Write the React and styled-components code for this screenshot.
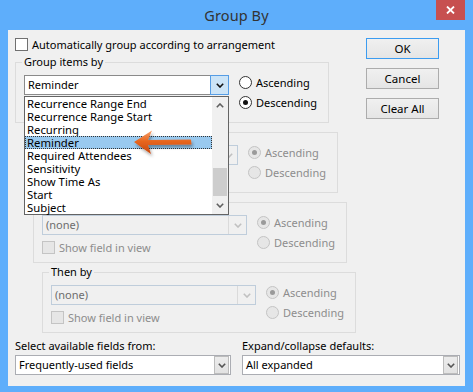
import React from "react";
import styled, { createGlobalStyle, css } from "styled-components";

const Global = createGlobalStyle`
  html, body { margin: 0; padding: 0; background: #5eaefb; }
  body { font-family: "Noto Sans", "Open Sans", sans-serif; font-size: 11px; color: #000; }
  * { box-sizing: border-box; }
`;

const Window = styled.div`
  width: 473px;
  height: 392px;
  background: #5eaefb;
  display: flex;
  flex-direction: column;
`;

const TitleBar = styled.div`
  height: 30px;
  display: grid;
  grid-template-columns: 1fr auto 1fr;
  align-items: start;
`;

const Title = styled.div`
  grid-column: 2;
  font-size: 14.5px;
  color: #333;
  line-height: 30px;
  letter-spacing: 0.1px;
`;

const CloseButton = styled.div`
  grid-column: 3;
  justify-self: end;
  margin-right: 8px;
  width: 29px;
  height: 20px;
  background: #c75050;
  display: flex;
  align-items: center;
  justify-content: center;
`;

const Content = styled.div`
  margin: 0 8px;
  height: 356px;
  background: #f0f0f0;
  padding: 8px 5px 0 7px;
  display: flex;
  flex-direction: column;
`;

const TopArea = styled.div`
  display: grid;
  grid-template-columns: 1fr 73px;
  padding-right: 21px;
`;

const Main = styled.div`
  display: flex;
  flex-direction: column;
`;

const Buttons = styled.div`
  display: flex;
  flex-direction: column;
  gap: 9px;
`;

const Button = styled.div`
  height: 21px;
  border: 1px solid ${(p) => (p.$default ? "#3c9cf0" : "#acacac")};
  background: linear-gradient(#f0f0f0, #e5e5e5);
  display: flex;
  align-items: center;
  justify-content: center;
  font-size: 11.5px;
  line-height: 1;
`;

const CheckRow = styled.label`
  display: flex;
  align-items: center;
  gap: 4px;
  height: 13px;
  color: ${(p) => (p.$disabled ? "#8d8d8d" : "#000")};
  line-height: 13px;
  white-space: nowrap;
`;

const CheckBox = styled.span`
  width: 13px;
  height: 13px;
  flex: none;
  border: 1px solid ${(p) => (p.$disabled ? "#c4c4c4" : "#707070")};
  background: ${(p) => (p.$disabled ? "#e6e6e6" : "#fff")};
`;

const Group = styled.fieldset`
  margin: ${(p) => (p.$first ? "3px" : "1px")} 0 0 ${(p) => p.$indent}px;
  width: 314px;
  height: 69px;
  padding: 5px 8px 0 8px;
  border: 1px solid #dcdcdc;
  min-width: 0;
`;

const Legend = styled.legend`
  padding: 0 2px;
  margin-left: -2px;
  line-height: 16px;
  color: #000;
`;

const GroupBody = styled.div`
  display: flex;
  gap: 10px;
`;

const FieldCol = styled.div`
  width: 205px;
  display: flex;
  flex-direction: column;
  gap: 6px;
`;

const RadioCol = styled.div`
  display: flex;
  flex-direction: column;
  gap: 7px;
  margin-top: 1px;
`;

const RadioRow = styled.div`
  display: flex;
  align-items: center;
  gap: 4px;
  height: 13px;
  line-height: 13px;
  color: ${(p) => (p.$disabled ? "#8d8d8d" : "#000")};
`;

const RadioCircle = styled.span`
  width: 13px;
  height: 13px;
  flex: none;
  border-radius: 50%;
  border: 1px solid ${(p) => (p.$disabled ? "#c4c4c4" : "#333")};
  background: ${(p) => (p.$disabled ? "#e6e6e6" : "#fff")};
  display: flex;
  align-items: center;
  justify-content: center;
  &::after {
    content: "";
    width: 5px;
    height: 5px;
    border-radius: 50%;
    background: ${(p) => (p.$checked ? (p.$disabled ? "#9a9a9a" : "#111") : "transparent")};
  }
`;

const SelectWrap = styled.div`
  position: relative;
`;

const SelectBox = styled.div`
  height: 20px;
  display: flex;
  align-items: stretch;
  border: 1px solid
    ${(p) => (p.$variant === "disabled" ? "#bfcddb" : p.$variant === "open" ? "#8a8a8a" : "#abadb3")};
  background: ${(p) => (p.$variant === "disabled" ? "#f0f0f0" : "#fff")};
  color: ${(p) => (p.$variant === "disabled" ? "#6d6d6d" : "#000")};
`;

const SelectText = styled.div`
  flex: 1;
  padding-left: 3px;
  line-height: 18px;
  white-space: nowrap;
  overflow: hidden;
`;

const ArrowArea = styled.div`
  width: ${(p) => (p.$variant === "normal" ? "15px" : "18px")};
  display: flex;
  align-items: center;
  justify-content: center;
  ${(p) =>
    p.$variant === "open" &&
    css`
      background: #cce4f7;
      border: 1px solid #569de5;
      margin: -1px -1px -1px 0;
      width: 19px;
    `}
  ${(p) =>
    p.$variant === "normal" &&
    css`
      background: linear-gradient(#ececec, #e2e2e2);
      border: 1px solid #bcbcbc;
      margin: 0 1px 0 0;
    `}
  ${(p) =>
    p.$variant === "disabled" &&
    css`
      border-left: 1px solid #dadada;
    `}
`;

const Chevron = ({ color = "#222", up = false }) => (
  <svg width="8" height="5" viewBox="0 0 8 5">
    <polyline
      points={up ? "0.8,4.2 4,1 7.2,4.2" : "0.8,0.8 4,4 7.2,0.8"}
      fill="none"
      stroke={color}
      strokeWidth="1.6"
    />
  </svg>
);

const Select = ({ value, variant = "normal", children }) => (
  <SelectWrap>
    <SelectBox $variant={variant}>
      <SelectText>{value}</SelectText>
      <ArrowArea $variant={variant}>
        <Chevron color={variant === "disabled" ? "#c0c0c0" : variant === "open" ? "#111" : "#555"} />
      </ArrowArea>
    </SelectBox>
    {children}
  </SelectWrap>
);

const DropList = styled.div`
  position: absolute;
  left: 0;
  top: 21px;
  width: 205px;
  height: 119px;
  border: 1px solid #646464;
  background: #fff;
  display: flex;
  z-index: 5;
`;

const Items = styled.div`
  flex: 1;
  display: flex;
  flex-direction: column;
`;

const Item = styled.div`
  height: 13px;
  line-height: 13px;
  padding-left: 2px;
  font-size: 11.3px;
  white-space: nowrap;
  ${(p) =>
    p.$selected &&
    css`
      background: #99c9ef;
      outline: 1px dotted #333;
      outline-offset: -1px;
    `}
`;

const ScrollBar = styled.div`
  width: 16px;
  background: #f0f0f0;
  display: flex;
  flex-direction: column;
`;

const ScrollArrow = styled.div`
  height: 17px;
  display: flex;
  align-items: center;
  justify-content: center;
`;

const Track = styled.div`
  flex: 1;
  display: flex;
  flex-direction: column;
`;

const Thumb = styled.div`
  margin: 54px 1px 0 1px;
  height: 28px;
  background: #cdcdcd;
`;

const Annotation = styled.svg`
  position: absolute;
  left: 96px;
  top: 30px;
  overflow: visible;
  pointer-events: none;
`;

const BottomRow = styled.div`
  display: grid;
  grid-template-columns: 216px 218px;
  column-gap: 11px;
  margin-top: 5px;
`;

const BottomField = styled.div`
  display: flex;
  flex-direction: column;
  gap: 1px;
`;

const FieldLabel = styled.div`
  line-height: 16px;
`;

const Radios = ({ checked, disabled }) => (
  <RadioCol>
    <RadioRow $disabled={disabled}>
      <RadioCircle $checked={checked === "asc"} $disabled={disabled} />
      Ascending
    </RadioRow>
    <RadioRow $disabled={disabled}>
      <RadioCircle $checked={checked === "desc"} $disabled={disabled} />
      Descending
    </RadioRow>
  </RadioCol>
);

const listItems = [
  "Recurrence Range End",
  "Recurrence Range Start",
  "Recurring",
  "Reminder",
  "Required Attendees",
  "Sensitivity",
  "Show Time As",
  "Start",
  "Subject",
];

const ThenBy = ({ indent }) => (
  <Group $indent={indent}>
    <Legend>Then by</Legend>
    <GroupBody>
      <FieldCol>
        <Select value="(none)" variant="disabled" />
        <CheckRow $disabled>
          <CheckBox $disabled />
          Show field in view
        </CheckRow>
      </FieldCol>
      <Radios checked="asc" disabled />
    </GroupBody>
  </Group>
);

export default function App() {
  return (
    <>
      <Global />
      <Window>
        <TitleBar>
          <Title>Group By</Title>
          <CloseButton>
            <svg width="9" height="8" viewBox="0 0 9 8">
              <path d="M1 0.5 L8 7.5 M8 0.5 L1 7.5" stroke="#fff" strokeWidth="1.8" />
            </svg>
          </CloseButton>
        </TitleBar>
        <Content>
          <TopArea>
            <Main>
              <CheckRow>
                <CheckBox />
                Automatically group according to arrangement
              </CheckRow>
              <Group $first $indent={0}>
                <Legend>Group items by</Legend>
                <GroupBody>
                  <FieldCol>
                    <Select value="Reminder" variant="open">
                      <DropList>
                        <Items>
                          {listItems.map((it) => (
                            <Item key={it} $selected={it === "Reminder"}>
                              {it}
                            </Item>
                          ))}
                        </Items>
                        <ScrollBar>
                          <ScrollArrow>
                            <Chevron up color="#606060" />
                          </ScrollArrow>
                          <Track>
                            <Thumb />
                          </Track>
                          <ScrollArrow>
                            <Chevron color="#606060" />
                          </ScrollArrow>
                        </ScrollBar>
                        <Annotation width="80" height="34" viewBox="0 0 80 34">
                          <defs>
                            <linearGradient id="arrowFill" x1="0" y1="0" x2="0" y2="1">
                              <stop offset="0" stopColor="#f6a06a" />
                              <stop offset="0.45" stopColor="#e8661f" />
                              <stop offset="1" stopColor="#c8470e" />
                            </linearGradient>
                            <filter id="arrowShadow" x="-20%" y="-40%" width="150%" height="200%">
                              <feDropShadow dx="1.5" dy="2.5" stdDeviation="1.8" floodColor="#000" floodOpacity="0.35" />
                            </filter>
                          </defs>
                          <path
                            d="M13 15 L31 3.5 L27 13 L70 12.5 L70.5 17.5 L27 18 L30 27 Z"
                            fill="url(#arrowFill)"
                            filter="url(#arrowShadow)"
                          />
                        </Annotation>
                      </DropList>
                    </Select>
                  </FieldCol>
                  <Radios checked="desc" />
                </GroupBody>
              </Group>
              <ThenBy indent={9} />
              <ThenBy indent={18} />
              <ThenBy indent={27} />
            </Main>
            <Buttons>
              <Button $default>OK</Button>
              <Button>Cancel</Button>
              <Button>Clear All</Button>
            </Buttons>
          </TopArea>
          <BottomRow>
            <BottomField>
              <FieldLabel>Select available fields from:</FieldLabel>
              <Select value="Frequently-used fields" />
            </BottomField>
            <BottomField>
              <FieldLabel>Expand/collapse defaults:</FieldLabel>
              <Select value="All expanded" />
            </BottomField>
          </BottomRow>
        </Content>
      </Window>
    </>
  );
}
